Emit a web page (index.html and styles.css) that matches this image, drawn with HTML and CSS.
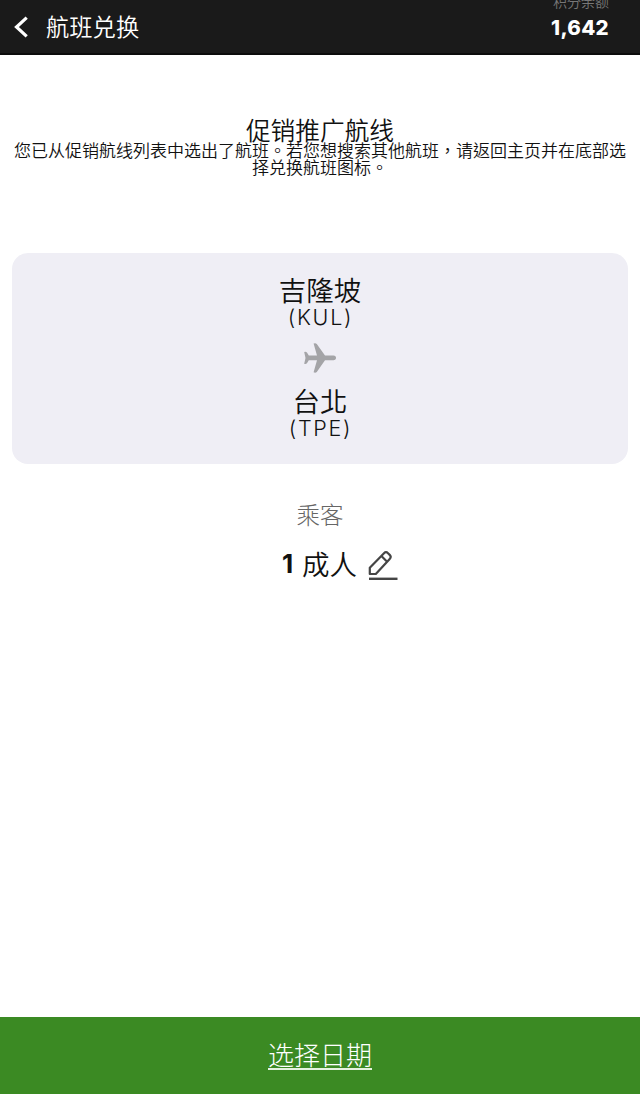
FILE: index.html
```html
<!DOCTYPE html>
<html lang="zh-Hant">
<head>
<meta charset="utf-8">
<title>航班兑换</title>
<link rel="stylesheet" href="styles.css">
</head>
<body>
<header class="topbar">
  <svg class="back" viewBox="0 0 16 24" width="16" height="24"><path d="M13.700 2.600 3.500 12l10.200 9.400" fill="none" stroke="#fff" stroke-width="3.200"/></svg>
  <h1 class="topbar-title">航班兑换</h1>
  <div class="points">
    <div class="points-label">积分余额</div>
    <div class="points-value">1,642</div>
  </div>
</header>
<main class="content">
  <h2 class="promo-title">促销推广航线</h2>
  <p class="promo-text">您已从促销航线列表中选出了航班。若您想搜索其他航班，请返回主页并在底部选择兑换航班图标。</p>
  <section class="route">
    <div class="city">吉隆坡</div>
    <div class="code">(KUL)</div>
    <svg class="plane" viewBox="0 0 34 32" width="34" height="32"><path d="M1.200 10q1.800-.8 2.900.8L5.800 13.500H14L10.600 1.600q1.800-.9 3.200.3L22 13.500h8.500c3.400 0 3.400 4.800 0 4.800H22L13.800 30q-1.400 1.200-3.200.3L14 18.300H5.800L4.100 21q-1.100 1.600-2.900.8L2.500 16z" fill="#a4a4a7"/></svg>
    <div class="city">台北</div>
    <div class="code">(TPE)</div>
  </section>
  <div class="passenger-label">乘客</div>
  <div class="passenger">
    <span class="count">1</span>
    <span class="adult">成人</span>
    <svg class="edit" viewBox="0 0 32 32" width="32" height="32"><g fill="none" stroke="#454545" stroke-width="2.200" stroke-linejoin="round"><path d="M2.800 24v-6.200L17 3.200q2-2 4 0l1.700 1.700q2 2 0 4L8.800 24zM14.400 6l5.700 5.700"/><path d="M2 28.800h28.500" stroke-width="2.400"/></g></svg>
  </div>
</main>
<footer class="bottom"><span class="choose">选择日期</span></footer>
</body>
</html>
```
FILE: styles.css
```css
* { box-sizing: border-box; margin: 0; padding: 0; }
body {
  width: 640px;
  height: 1094px;
  display: flex;
  flex-direction: column;
  overflow: hidden;
  background: #fff;
  color: #111;
  font-family: "Noto Sans CJK TC", "Noto Sans CJK SC", sans-serif;
  font-weight: 350;
}
.topbar {
  height: 55px;
  flex: none;
  display: flex;
  align-items: flex-start;
  background: #1a1a1a;
  border-bottom: 2px solid #0c0c0c;
  color: #fff;
  overflow: hidden;
}
.back { margin: 15px 0 0 13px; }
.topbar-title { margin: 11px 0 0 17px; font-size: 23.300px; line-height: 30px; font-weight: 350; }
.points { margin: -8px 31px 0 auto; text-align: right; }
.points-label { font-size: 14px; line-height: 18px; color: #777; }
.points-value { margin-top: 6px; font: 800 20.500px/24px Inter, sans-serif; letter-spacing: .3px; }
.content { flex: 1; text-align: center; }
.promo-title { margin-top: 62px; font-size: 24.700px; line-height: 24px; font-weight: 350; }
.promo-text { padding: 0 12px; font-size: 17px; line-height: 17px; }
.route {
  height: 211px;
  margin: 78px 12px 0;
  padding-top: 21px;
  border-radius: 16px;
  background: #efeef5;
  display: flex;
  flex-direction: column;
  align-items: center;
}
.city { font-size: 27.500px; line-height: 30px; font-weight: 350; }
.code { margin-top: 1px; padding-left: 1px; font: 300 21.500px/24px Inter, sans-serif; letter-spacing: 1.700px; }
.plane { margin: 13px 0 11px; }
.passenger-label { margin-top: 36px; font-size: 23.500px; line-height: 28px; color: #666; font-weight: 300; }
.passenger { margin: 20px 0 0 41px; display: flex; justify-content: center; align-items: flex-start; }
.count { margin-right: 9px; font: 700 26px/32px Inter, sans-serif; }
.adult { margin-top: -1px; font-size: 27.500px; line-height: 32px; font-weight: 350; }
.edit { margin: 2px 0 0 10px; }
.bottom { height: 77px; flex: none; background: #3b8a23; color: #fff; text-align: center; padding-top: 22px; }
.choose { display: inline-block; font-size: 26px; line-height: 29px; font-weight: 300; border-bottom: 2px solid #e5f2e0; }
```
